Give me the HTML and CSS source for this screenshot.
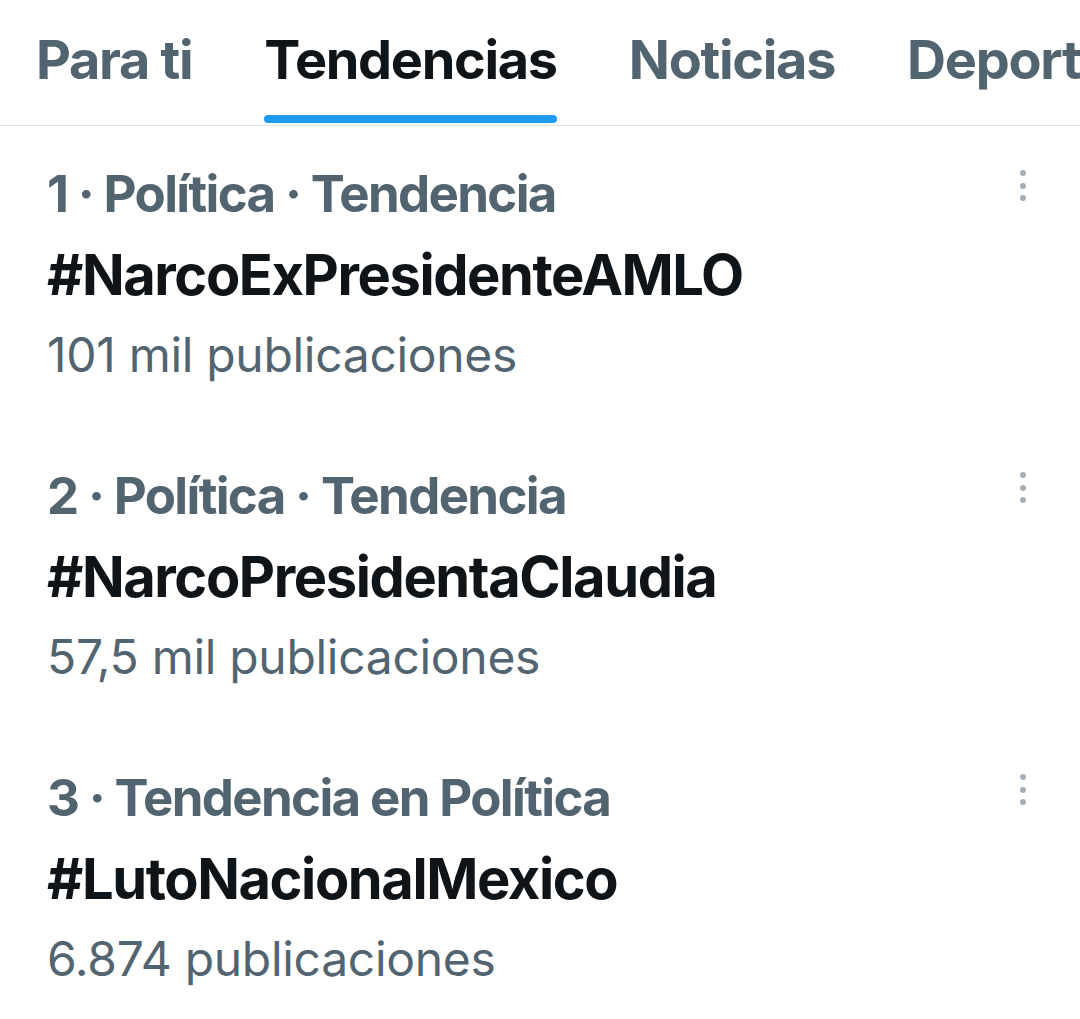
FILE: index.html
```html
<!DOCTYPE html>
<html lang="es">
<head>
<meta charset="utf-8">
<title>Tendencias</title>
<link rel="stylesheet" href="styles.css">
</head>
<body>
<nav class="tabs">
  <div class="tab"><span class="tab-label">Para ti</span><span class="tab-bar"></span></div>
  <div class="tab active"><span class="tab-label">Tendencias</span><span class="tab-bar"></span></div>
  <div class="tab"><span class="tab-label">Noticias</span><span class="tab-bar"></span></div>
  <div class="tab"><span class="tab-label">Deportes</span><span class="tab-bar"></span></div>
</nav>
<main class="trends">
  <section class="trend">
    <div class="trend-body">
      <div class="trend-meta">1 · Política · Tendencia</div>
      <div class="trend-name">#NarcoExPresidenteAMLO</div>
      <div class="trend-count">101 mil publicaciones</div>
    </div>
    <div class="more"><span></span><span></span><span></span></div>
  </section>
  <section class="trend">
    <div class="trend-body">
      <div class="trend-meta">2 · Política · Tendencia</div>
      <div class="trend-name">#NarcoPresidentaClaudia</div>
      <div class="trend-count">57,5 mil publicaciones</div>
    </div>
    <div class="more"><span></span><span></span><span></span></div>
  </section>
  <section class="trend">
    <div class="trend-body">
      <div class="trend-meta">3 · Tendencia en Política</div>
      <div class="trend-name">#LutoNacionalMexico</div>
      <div class="trend-count">6.874 publicaciones</div>
    </div>
    <div class="more"><span></span><span></span><span></span></div>
  </section>
</main>
</body>
</html>
```
FILE: styles.css
```css
html, body {
  margin: 0;
  padding: 0;
  background: #ffffff;
  font-family: Inter, "Liberation Sans", sans-serif;
  overflow: hidden;
}

.tabs {
  display: flex;
  height: 125px;
  border-bottom: 1px solid #dfe3e6;
  white-space: nowrap;
  overflow: hidden;
}

.tab {
  display: flex;
  flex-direction: column;
  justify-content: flex-end;
  padding: 0 36px;
  flex: none;
}

.tab-label {
  font-size: 54px;
  font-weight: 700;
  color: #536471;
  line-height: 68px;
  letter-spacing: -1.3px;
}

.tab-bar {
  display: block;
  height: 8px;
  margin-top: 21px;
  margin-bottom: 2px;
  border-radius: 4px;
}

.tab.active .tab-label { color: #0f1419; }
.tab.active .tab-bar { background: #1d9bf0; }

.trend {
  display: flex;
  height: 302px;
  padding-left: 47px;
  box-sizing: border-box;
}

.trend-body {
  flex: 1;
  display: flex;
  flex-direction: column;
  padding-top: 29px;
  white-space: nowrap;
}

.trend-meta {
  font-size: 51px;
  font-weight: 700;
  color: #536471;
  line-height: 78px;
  letter-spacing: -1.65px;
}

.trend-name {
  font-size: 56px;
  font-weight: 700;
  color: #0f1419;
  line-height: 84px;
  letter-spacing: -1.4px;
}

.trend-count {
  font-size: 48px;
  font-weight: 400;
  color: #536471;
  line-height: 76px;
  letter-spacing: -0.3px;
}

.more {
  display: flex;
  flex-direction: column;
  gap: 6.5px;
  padding-top: 44px;
  width: 60px;
  align-items: center;
  margin-right: 27px;
}

.more span {
  display: block;
  width: 6px;
  height: 6px;
  border-radius: 50%;
  background: #a5afb8;
}
```
